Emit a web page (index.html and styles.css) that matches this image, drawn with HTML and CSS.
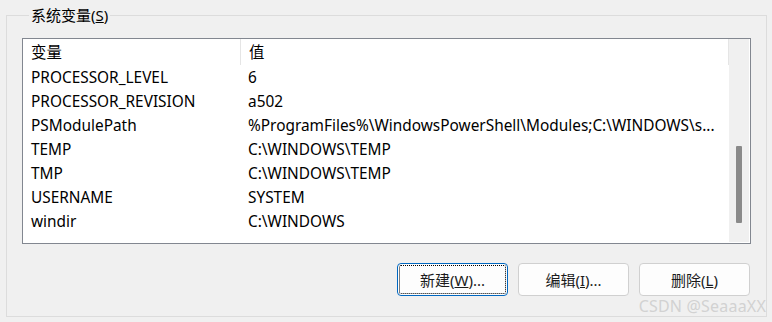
FILE: index.html
```html
<!DOCTYPE html>
<html lang="zh-CN">
<head>
  <meta charset="UTF-8">
  <title>系统变量</title>
  <link rel="stylesheet" href="styles.css">
</head>
<body>
  <!-- System variables group -->
  <fieldset class="group">
    <legend>系统变量(<u>S</u>)</legend>

    <div class="listview">
      <div class="list-body">
        <div class="list-head">
          <div class="col-name">变量</div>
          <div class="col-value">值</div>
        </div>
        <div class="row"><div class="col-name">PROCESSOR_LEVEL</div><div class="col-value">6</div></div>
        <div class="row"><div class="col-name">PROCESSOR_REVISION</div><div class="col-value">a502</div></div>
        <div class="row"><div class="col-name">PSModulePath</div><div class="col-value">%ProgramFiles%\WindowsPowerShell\Modules;C:\WINDOWS\s...</div></div>
        <div class="row"><div class="col-name">TEMP</div><div class="col-value">C:\WINDOWS\TEMP</div></div>
        <div class="row"><div class="col-name">TMP</div><div class="col-value">C:\WINDOWS\TEMP</div></div>
        <div class="row"><div class="col-name">USERNAME</div><div class="col-value">SYSTEM</div></div>
        <div class="row"><div class="col-name">windir</div><div class="col-value">C:\WINDOWS</div></div>
      </div>
      <div class="scrollbar">
        <div class="thumb"></div>
      </div>
    </div>

    <div class="buttons">
      <button class="btn focused"><span class="focus-ring">新建(<u>W</u>)...</span></button>
      <button class="btn"><span class="focus-ring">编辑(<u>I</u>)...</span></button>
      <button class="btn"><span class="focus-ring">删除(<u>L</u>)</span></button>
    </div>
  </fieldset>

  <div class="watermark">CSDN @SeaaaXX</div>
</body>
</html>
```

FILE: styles.css
```css
body {
  margin: 0;
  width: 772px;
  height: 322px;
  overflow: hidden;
  position: relative;
  background-color: #f0f0f0;
  font-family: "Segoe UI", "Noto Sans", "Noto Sans CJK SC", sans-serif;
  font-size: 15px;
  color: #000000;
}
.group {
  margin: 7px 5px 0 6px;
  padding: 15px 15px 20px 15px;
  border: 1px solid #dcdcdc;
  min-width: 0;
}
.group legend {
  margin-left: 7px;
  padding: 0 2px;
  line-height: 16px;
  height: 16px;
}
.listview {
  display: flex;
  height: 204px;
  border: 1px solid #828790;
  background-color: #ffffff;
  font-size: 15.4px;
}
.list-body {
  flex: 1;
  min-width: 0;
  overflow: hidden;
}
.list-head {
  display: flex;
  height: 26px;
}
.list-head .col-name,
.list-head .col-value {
  box-sizing: border-box;
  height: 26px;
  padding-top: 2px;
  line-height: 24px;
  border-right: 1px solid #e5e5e5;
}
.row {
  display: flex;
  height: 24px;
}
.row .col-name,
.row .col-value {
  box-sizing: border-box;
  height: 24px;
  padding-top: 2px;
  line-height: 22px;
}
.col-name {
  width: 217px;
  padding-left: 8px;
  white-space: nowrap;
  overflow: hidden;
}
.list-head .col-name {
  width: 218px;
}
.col-value {
  flex: 1;
  padding-left: 8px;
  white-space: nowrap;
  overflow: hidden;
}
.scrollbar {
  width: 20px;
  margin: 0 1px 1px 0;
  background-color: #f0f0f0;
}
.thumb {
  width: 6px;
  height: 77px;
  margin: 107px 0 0 7px;
  background-color: #8a8a8a;
  border-radius: 1px;
}
.buttons {
  display: flex;
  justify-content: flex-end;
  gap: 10px;
  margin-top: 19px;
  padding-right: 1px;
}
.btn {
  width: 111px;
  height: 33px;
  padding: 1px;
  border: 1px solid #d0d0d0;
  border-radius: 4px;
  background-color: #fdfdfd;
  font-family: inherit;
  font-size: 15px;
  color: #1b1b1b;
  display: flex;
}
.focus-ring {
  flex: 1;
  display: flex;
  align-items: center;
  justify-content: center;
  border: 1px dotted transparent;
  border-radius: 2px;
}
.btn.focused {
  border-color: #0067c0;
}
.btn.focused .focus-ring {
  border-color: #000000;
}
.watermark {
  position: absolute;
  right: 6px;
  bottom: 8px;
  font-size: 16px;
  line-height: 16px;
  color: #d2d2d2;
  letter-spacing: 0.2px;
}
```
